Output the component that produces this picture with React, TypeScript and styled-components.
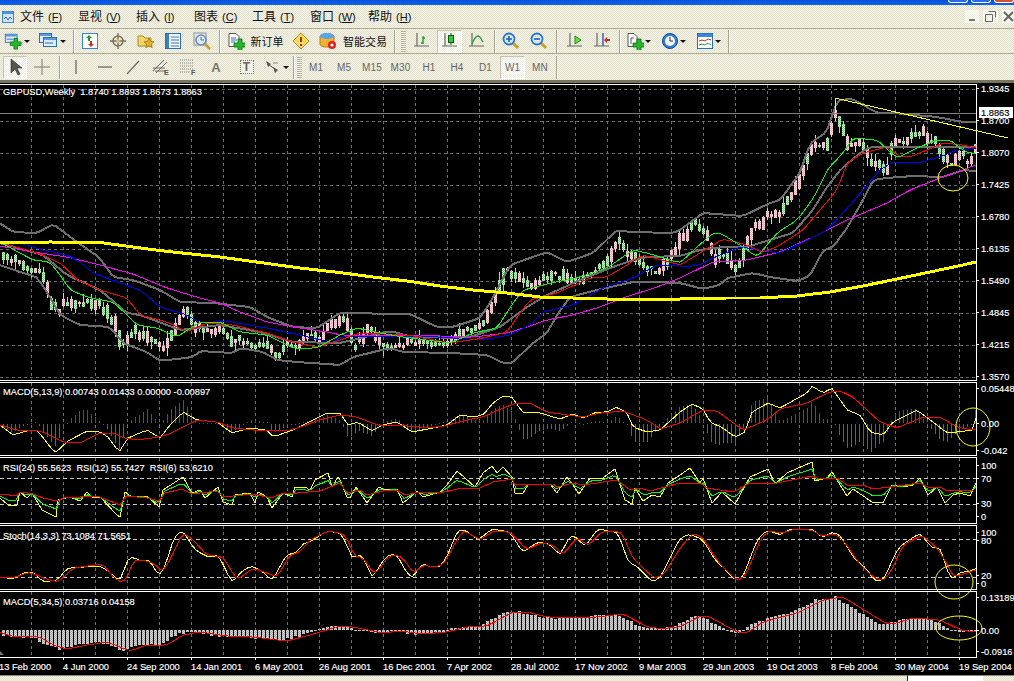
import React from "react";
import styled, { createGlobalStyle } from "styled-components";

type Pt = [number, number];
const P = (...n: number[]): Pt[] => { const r: Pt[] = []; for (let i = 0; i < n.length; i += 2) r.push([n[i], n[i + 1]]); return r; };
const at = (pts: Pt[], x: number): number => {
  if (x <= pts[0][0]) return pts[0][1];
  for (let i = 1; i < pts.length; i++) if (x <= pts[i][0]) {
    const [a, b] = pts[i - 1]; const [c, d] = pts[i];
    return b + ((d - b) * (x - a)) / (c - a || 1);
  }
  return pts[pts.length - 1][1];
};
const sequence = (fn: (x: number) => number) => { const o: string[] = []; for (let x = 0; x <= 976; x += 4) o.push(`${x},${fn(x).toFixed(1)}`); return o.join(" "); };
const raw = (pts: Pt[]) => pts.map(p => p.join(",")).join(" ");
const smooth = (pts: Pt[], r: number) => sequence(x => (at(pts, x - r) + at(pts, x) * 2 + at(pts, x + r)) / 4);
let seed = 17;
const rnd = () => { seed = (seed * 16807) % 2147483647; return (seed % 10000) / 10000; };

const MA200 = P(0,243,50,242,100,242.5,160,250.6,220,257,300,268,340,272.6,373,277,407,281,440,286,473,290,507,293,540,297,573,298,607,299,680,299,727,298,760,298,797,296,830,292,863,286,897,279,930,272,963,265,976,262);
const MAG = P(0,246,33,252,67,257,100,265,133,274,167,288,200,298,220,303,240,312,267,322,300,328,333,333,340,335,373,335,440,336,473,337,507,333,527,327,547,320,573,315,600,307,623,298,657,287,680,278,713,262,747,260,780,252,813,237,847,220,887,203,910,190,940,178,963,170,975,165);
const BLUE = P(0,243,20,243,43,250,67,255,80,262,93,273,117,282,140,290,160,307,187,315,200,323,227,321,267,328,300,335,333,343,340,337,423,336,483,340,510,335,530,325,543,312,573,305,603,288,633,278,657,265,680,266,697,266,713,258,740,247,760,250,780,253,803,242,827,230,843,213,863,190,880,170,893,162,917,163,940,157,957,150,975,148);
const RED = P(0,243,20,248,43,255,63,265,77,280,100,290,127,298,140,315,167,322,187,332,207,323,233,325,267,333,293,342,317,347,340,340,360,333,407,335,450,343,483,338,507,332,520,313,530,300,557,293,590,278,607,277,627,265,643,255,680,265,700,253,723,239,747,245,763,253,780,245,803,230,820,210,837,190,847,163,863,153,887,147,900,157,910,157,927,150,943,143,963,145,975,148);
const GREEN = P(0,242,20,253,33,260,50,262,60,275,70,290,90,298,113,302,127,315,137,325,157,328,177,337,200,322,220,322,240,332,267,335,293,348,317,348,340,335,357,328,380,333,403,337,450,343,473,333,497,328,513,303,523,290,547,284,580,277,607,268,633,250,647,253,680,263,697,247,713,233,720,233,740,245,757,257,777,233,797,220,810,203,818,190,827,170,843,153,853,138,877,140,897,158,917,148,937,140,950,140,967,153,975,153);
const UP = P(0,223,13,232,37,233,53,224,77,242,100,258,113,277,133,280,160,290,180,302,213,303,250,307,267,317,293,327,317,328,340,313,410,314,437,327,453,327,480,318,490,303,510,265,547,252,567,262,593,253,617,230,630,232,673,233,680,230,703,213,743,216,770,203,780,200,800,173,810,143,827,132,837,100,853,99,877,113,893,113,937,117,963,122,975,122);
const LOW = P(0,265,20,272,37,277,50,297,60,315,80,325,110,327,123,343,147,352,160,361,193,357,200,351,233,353,240,348,263,352,277,360,297,362,340,365,353,357,390,348,403,352,450,353,487,355,503,363,512,363,533,343,547,333,557,315,570,297,597,290,633,282,653,282,680,283,703,289,720,285,727,278,753,273,770,277,797,281,810,276,823,250,833,247,847,228,863,200,873,180,887,178,913,176,943,177,963,170,975,171);
const MID = P(0,243,43,255,67,275,100,290,127,313,140,315,167,325,180,330,220,325,260,332,293,342,340,343,390,331,413,337,467,338,500,327,527,307,547,295,580,280,613,267,633,260,647,257,680,256,700,250,723,247,747,247,773,239,793,233,813,210,825,190,840,170,860,153,870,147,913,147,975,147);
const PRICE = P(0,255,10,258,20,262,30,268,43,275,50,300,60,315,63,305,70,302,85,302,100,305,115,325,122,345,133,330,150,340,165,350,170,335,180,320,187,310,195,325,205,330,220,330,230,340,240,340,255,345,270,345,277,358,285,345,295,345,310,335,320,340,330,325,340,320,345,320,355,345,370,328,380,345,400,345,420,340,440,345,450,340,465,330,485,325,490,310,495,295,505,270,515,275,520,280,530,285,540,280,555,275,575,280,590,275,605,265,617,240,625,250,640,262,650,270,660,270,675,250,680,240,687,233,695,222,700,227,707,233,712,250,715,260,722,252,728,257,732,265,737,268,742,260,748,242,752,230,762,223,768,213,775,213,780,217,783,207,788,198,795,188,800,177,803,173,812,145,820,147,828,143,832,123,835,113,843,128,848,147,852,143,860,143,872,163,880,167,887,170,892,143,900,140,907,142,915,133,923,130,928,143,935,140,943,153,950,163,957,158,963,155,968,163,975,150);

const MACD_Y = P(0,425,13,435,30,430,37,430,55,453,68,441,87,431,100,432,108,437,119,452,128,438,147,430,160,438,170,425,183,412,197,420,217,422,232,433,250,428,267,430,273,437,293,430,307,423,327,413,340,413,348,425,358,422,372,431,382,425,397,422,412,432,433,428,447,425,460,415,473,417,483,415,493,403,503,396,512,397,523,413,537,412,560,419,573,414,583,418,597,412,607,412,617,407,627,413,633,427,647,432,660,430,680,412,692,404,703,409,710,422,723,428,735,437,745,432,752,412,768,403,780,408,807,393,812,386,823,393,832,388,847,410,860,415,870,432,883,435,893,422,917,410,933,422,947,433,957,432,973,430,976,417);
const MACD_R = P(0,425,20,431,33,430,43,432,63,442,80,443,100,433,113,433,127,439,147,439,167,435,183,427,197,420,217,422,233,428,253,430,287,431,300,427,320,420,340,415,357,417,380,426,397,425,420,427,440,427,467,420,483,417,503,408,517,403,530,403,547,412,567,415,583,417,600,413,623,411,647,420,660,429,680,423,703,410,717,411,743,430,767,420,780,409,807,403,830,392,840,391,853,397,880,422,897,428,923,417,940,417,957,427,973,430);
const RSI_Y = P(0,498,8,505,17,505,20,492,27,498,32,493,42,510,56,517,58,500,70,497,80,501,87,492,93,498,100,497,117,515,120,517,125,492,132,497,147,496,159,507,163,490,183,477,192,493,200,490,205,498,218,487,223,502,232,505,235,495,250,493,255,503,258,492,267,497,272,508,283,493,292,497,295,487,305,487,310,490,315,480,328,473,332,487,338,477,340,480,347,497,350,498,356,487,367,503,379,487,385,490,397,489,403,503,407,500,417,491,423,497,440,492,447,485,457,471,465,478,475,487,483,473,492,466,497,473,503,467,512,477,515,493,523,493,528,485,550,484,557,493,567,477,573,485,579,494,590,478,603,478,615,469,625,500,632,504,635,488,643,501,652,495,660,497,668,483,680,475,690,468,700,483,703,478,712,503,722,492,735,504,750,477,768,469,775,484,787,473,812,462,815,481,827,478,832,472,847,496,853,489,872,502,883,503,892,485,903,487,913,485,920,478,928,495,937,487,945,503,953,495,960,493,970,496,976,483);
const RSI_R = P(0,494,17,496,20,492,33,494,43,498,57,501,63,498,97,496,110,501,120,505,126,496,147,498,159,501,165,493,182,489,192,494,217,491,223,497,233,496,253,494,272,498,283,493,297,493,320,491,340,483,347,493,360,490,367,495,383,491,397,490,405,495,420,492,440,493,457,489,480,488,493,482,512,479,515,485,553,484,557,487,573,483,583,485,617,480,630,490,640,488,650,491,680,483,700,483,707,488,733,492,750,483,777,483,812,476,817,478,837,478,847,485,863,485,873,489,890,487,920,483,930,488,940,487,947,491,973,490);
const STO_Y = P(0,577,13,579,25,572,33,572,43,582,58,580,67,568,100,566,107,570,120,582,128,558,133,557,140,561,150,560,159,577,165,567,173,540,180,531,183,531,195,550,210,558,218,554,232,583,243,570,252,566,263,572,272,581,287,554,297,553,303,543,310,542,327,531,340,533,345,540,352,559,360,554,365,560,372,579,382,562,388,555,397,554,403,567,412,579,422,563,430,567,440,567,447,557,458,529,465,530,478,540,492,529,510,532,523,553,537,542,550,544,560,556,570,535,575,536,585,547,598,528,607,531,618,532,628,562,638,567,652,582,660,578,680,538,690,534,703,540,715,560,723,567,737,582,743,577,757,540,767,530,780,535,790,529,812,529,823,538,832,532,840,535,855,560,865,567,875,581,883,581,897,550,903,544,920,533,932,548,940,547,951,581,960,572,970,572,975,568);
const STO_R = P(0,577,13,578,30,572,43,578,57,582,63,578,73,568,103,564,113,577,122,583,128,577,133,560,143,560,153,563,163,572,170,560,183,532,193,540,207,555,223,557,237,580,253,568,277,577,290,555,300,552,310,540,328,531,340,533,347,537,353,555,363,558,375,575,387,558,397,554,407,563,413,574,423,565,433,567,443,565,453,547,463,530,480,540,493,531,510,532,527,550,540,543,553,545,563,555,577,537,588,546,602,531,622,532,632,557,642,567,655,579,665,573,680,548,693,533,703,538,718,562,738,582,747,573,760,540,768,531,782,533,795,529,812,530,823,537,833,533,843,540,858,562,873,577,883,581,892,570,903,545,922,535,937,548,945,560,953,577,967,573,975,570);
const AO_R = P(0,632,10,636,40,637,53,645,67,649,87,645,107,642,130,651,147,645,167,645,183,635,200,632,227,636,253,637,287,641,310,635,340,626,353,627,383,633,400,631,423,634,447,632,467,627,487,626,513,612,527,612,547,617,573,618,597,617,623,614,650,628,670,628,680,627,700,616,708,616,737,632,747,633,763,622,797,613,823,600,843,597,887,624,897,623,913,618,940,620,963,631,975,631);

const VGRID: number[] = []; for (let x = 31; x < 976; x += 32) VGRID.push(x);
const BARS: number[] = []; for (let x = 3; x < 976; x += 4) BARS.push(x);
const CANDLES = BARS.map(x => {
  const c = at(PRICE, x) + (rnd() - 0.5) * 5, prev = at(PRICE, x - 4), next = at(PRICE, x + 4);
  const up = rnd() < 0.72 ? next - prev < 0 : next - prev >= 0;
  const h = 2 + rnd() * rnd() * 9 + Math.min(9, Math.abs(next - prev) * 0.5);
  const top = c - h / 2, wt = rnd() * rnd() * 9, wb = rnd() * rnd() * 9;
  return { x, up, top: Math.round(top), h: Math.round(h), wt: Math.round(top - wt), wb: Math.round(top + h + wb) };
});

const Global = createGlobalStyle`
  html, body { margin: 0; padding: 0; background: #ece9d8; overflow: hidden; }
  * { box-sizing: border-box; }
`;
const Window = styled.div`
  width: 1014px; height: 681px; display: flex; flex-direction: column; overflow: hidden;
  font-family: "Liberation Sans", "Noto Sans CJK SC", sans-serif;
  background: repeating-conic-gradient(#f7f5ea 0 25%, #e2dfca 0 50%) 0 0 / 2px 2px;
`;
const TitleBar = styled.div`
  height: 5px; flex: none; display: flex; justify-content: flex-end; align-items: flex-end; gap: 3px; padding-right: 0;
  background: linear-gradient(#0a4fd6, #0b63ee);
`;
const CaptionBtn = styled.div<{ $red?: boolean }>`
  width: 20px; height: 3px; border: 1px solid #fff; border-top: 0; border-radius: 0 0 3px 3px; margin-bottom: 2px;
  background: ${p => (p.$red ? "#d8502a" : "#2a6ae8")};
`;
const MenuBar = styled.div`
  height: 24px; flex: none; display: flex; align-items: center; border-bottom: 1px solid #aca98f; position: relative;
`;
const MdiIcon = styled.div` width: 20px; padding-left: 2px; height: 14px; display: flex; margin-top: 3px; `;
const MenuItem = styled.div`
  width: 58px; font-size: 12px; color: #111; white-space: nowrap; font-family: "Noto Sans CJK SC", sans-serif; line-height: 14px; margin-top: -1px;
`;
const MenuKey = styled.span` font-size: 11px; font-family: "Liberation Sans", sans-serif; margin-left: 4px; u { text-decoration-thickness: 1px; } `;
const WinBtns = styled.div` position: absolute; right: 0; top: 5px; display: flex; gap: 4px; `;
const WinBtn = styled.div<{ $w: number }>`
  width: ${p => p.$w}px; height: 13px; display: flex; align-items: center; justify-content: center; background: rgba(255,255,255,.55);
`;
const ToolRow = styled.div<{ $h: number; $dark?: boolean }>`
  height: ${p => p.$h}px; flex: none; display: flex; align-items: center;
  border-bottom: ${p => (p.$dark ? "3px solid #77745f" : "1px solid #aca98f")};
`;
const Slot = styled.div<{ $w: number; $on?: boolean }>`
  width: ${p => p.$w}px; height: 23px; flex: none; display: flex; align-items: center; justify-content: center;
  ${p => p.$on ? "background: repeating-conic-gradient(#fff 0 25%, #f0eee2 0 50%) 0 0 / 2px 2px; border: 1px solid #c8c5ae; border-right-color:#fff; border-bottom-color:#fff;" : ""}
`;
const Sep = styled.div<{ $w: number }>`
  width: ${p => p.$w}px; height: 23px; flex: none; display: flex; justify-content: center;
  &::after { content: ""; width: 1px; height: 100%; background: #a7a48d; box-shadow: 1px 0 0 #fff; }
`;
const Grip = styled.div<{ $w: number }>`
  width: ${p => p.$w}px; height: 21px; flex: none; display: flex; justify-content: center;
  &::after { content: ""; width: 5px; height: 100%; background: repeating-linear-gradient(#b3b09c 0 1px, #f7f5ea 1px 2px); }
`;
const Drop = styled.div<{ $w: number }>`
  width: ${p => p.$w}px; flex: none; display: flex; justify-content: center;
  &::after { content: ""; border: 3px solid transparent; border-top: 3px solid #111; border-bottom: 0; }
`;
const Gap = styled.div<{ $w: number }>` width: ${p => p.$w}px; flex: none; `;
const ToolText = styled.div<{ $w: number }>`
  width: ${p => p.$w}px; flex: none; text-align: center; font-size: 11px; color: #111; white-space: nowrap;
  font-family: "Noto Sans CJK SC", sans-serif;
`;
const Tf = styled(Slot)` font-size: 10px; color: #666; letter-spacing: .1px; `;
const ChartArea = styled.div` height: 592px; flex: none; background: #000; overflow: visible; position: relative; `;
const PaneSvg = styled.svg`
  display: block; overflow: visible; width: 1014px;
  font-family: "Liberation Sans", sans-serif; font-size: 9.3px;
  polyline { fill: none; shape-rendering: crispEdges; }
  line, rect { shape-rendering: crispEdges; }
  text { fill: #fff; stroke: #fff; stroke-width: .15px; white-space: pre; }
  .ring { fill: none; stroke: #ffff00; stroke-width: 1; }
  .boll { stroke: #6e6e6e; stroke-width: 2; }
  .g { stroke: #6e6e6e; stroke-dasharray: 3 3; }
  .lvl { stroke: #c8c8c8; stroke-dasharray: 4 3; }
`;
const Footer = styled.div` height: 6px; flex: none; display: flex; justify-content: flex-start; `;
const FooterFill = styled.div<{ $w: number; $white?: boolean }>`
  width: ${p => p.$w}px; height: 100%; border-top: 1px solid #8b8973;
  ${p => p.$white ? "background:#fff; border-left:1px solid #222;" : ""}
`;

const Axis = ({ y }: { y: number }) => <line x1={0} x2={976} y1={y + 0.5} y2={y + 0.5} stroke="#fff" />;
const VLines = ({ a, b }: { a: number; b: number }) => <>{VGRID.map(x => <line key={x} className="g" x1={x + 0.5} x2={x + 0.5} y1={a} y2={b} />)}</>;
const Label = ({ y, t }: { y: number; t: string }) => <>
  <line x1={976} x2={979} y1={y + 0.5} y2={y + 0.5} stroke="#fff" />
  <text x={981} y={y + 4}>{t}</text>
</>;
const RightEdge = ({ a, b }: { a: number; b: number }) => <line x1={976.5} x2={976.5} y1={a} y2={b} stroke="#fff" />;

const Defs = () => <defs>
  <pattern id="pink" width="2" height="2" patternUnits="userSpaceOnUse"><rect width="2" height="2" fill="#ffe4ea" /><rect width="1" height="1" fill="#ff9db2" /><rect x="1" y="1" width="1" height="1" fill="#ff9db2" /></pattern>
  <pattern id="lime" width="2" height="2" patternUnits="userSpaceOnUse"><rect width="2" height="2" fill="#d8ffd8" /><rect width="1" height="1" fill="#5fd65f" /><rect x="1" y="1" width="1" height="1" fill="#5fd65f" /></pattern>
  <pattern id="grey" width="2" height="2" patternUnits="userSpaceOnUse"><rect width="2" height="2" fill="#d8d8d8" /><rect width="1" height="1" fill="#a4a4a4" /><rect x="1" y="1" width="1" height="1" fill="#a4a4a4" /></pattern>
</defs>;

const MainPane = () => (
  <PaneSvg height={298} viewBox="0 83 1014 298">
    <Defs />
    <Axis y={84} /><Axis y={380} /><RightEdge a={84} b={381} />
    <VLines a={85} b={380} />
    {[89,121,153,185,217,249,281,313,345,377].map(y => <line key={y} className="g" x1={0} x2={976} y1={y + 0.5} y2={y + 0.5} />)}
    {CANDLES.map(c => <g key={c.x}>
      <line x1={c.x + 0.5} x2={c.x + 0.5} y1={c.wt} y2={c.wb} stroke={c.up ? "#ffc0cb" : "#90ee90"} />
      <rect x={c.x - 1} y={c.top} width={3} height={c.h} fill={c.up ? "url(#pink)" : "url(#lime)"} />
    </g>)}
    <line x1={0} x2={976} y1={113.5} y2={113.5} stroke="#808080" />
    <polyline className="boll" points={smooth(UP, 3)} />
    <polyline className="boll" points={smooth(LOW, 3)} />
    <polyline className="boll" points={smooth(MID, 3)} />
    <polyline points={smooth(MAG, 3)} stroke="#ff00ff" />
    <polyline points={smooth(BLUE, 3)} stroke="#0000ff" />
    <polyline points={smooth(RED, 3)} stroke="#ff0000" />
    <polyline points={smooth(GREEN, 3)} stroke="#00ff00" />
    <polyline points={raw(MA200)} stroke="#ffff00" strokeWidth={3} />
    <polyline points="835,98 1008,138" stroke="#ffff00" />
    <line x1={835.5} x2={835.5} y1={98} y2={112} stroke="#ffff00" />
    <ellipse className="ring" cx={953} cy={178} rx={15} ry={13} />
    <text x={3} y={95}>GBPUSD,Weekly  1.8740 1.8893 1.8673 1.8863</text>
    <Label y={88} t="1.9345" /><Label y={120} t="1.8700" /><Label y={152} t="1.8070" /><Label y={184} t="1.7425" />
    <Label y={216} t="1.6780" /><Label y={248} t="1.6135" /><Label y={280} t="1.5490" /><Label y={312} t="1.4845" />
    <Label y={344} t="1.4215" /><Label y={376} t="1.3570" />
    <rect x={979} y={107} width={34} height={11} fill="#fff" />
    <text x={981} y={116} style={{ fill: "#000", stroke: "#000" }}>1.8863</text>
  </PaneSvg>
);

const MacdPane = () => (
  <PaneSvg height={75} viewBox="0 381 1014 75">
    <Axis y={382} /><RightEdge a={382} b={456} />
    <VLines a={383} b={455} />
    {BARS.map(x => {
      const v = Math.round((at(MACD_R, x) - at(MACD_Y, x)) * 1.5);
      const up = v >= 0;
      return <rect key={x} x={x} y={up ? 423 - v : 424} width={1} height={Math.max(1, Math.abs(v))} fill={up ? "#e01818" : "#2a8a2a"} />;
    })}
    <polyline points={smooth(MACD_Y, 1)} stroke="#ffff00" />
    <polyline points={smooth(MACD_R, 2)} stroke="#ff0000" />
    <ellipse className="ring" cx={973} cy={427} rx={17} ry={19} />
    <text x={3} y={395}>MACD(5,13,9) 0.00743 0.01433 0.00000 -0.00897</text>
    <Label y={388} t="0.05448" /><Label y={423} t="0.00" /><Label y={450} t="-0.042" />
  </PaneSvg>
);

const RsiPane = () => (
  <PaneSvg height={68} viewBox="0 456 1014 68">
    <Axis y={455} /><Axis y={457} /><RightEdge a={457} b={524} />
    <VLines a={458} b={524} />
    <line className="lvl" x1={0} x2={976} y1={478.5} y2={478.5} /><line className="lvl" x1={0} x2={976} y1={504.5} y2={504.5} />
    <polyline points={raw(RSI_Y)} stroke="#ffff00" />
    <polyline points={sequence(x => (at(RSI_Y, x) + at(RSI_R, x)) / 2)} stroke="#00ff00" />
    <polyline points={raw(RSI_R)} stroke="#ff0000" />
    <text x={3} y={471}>RSI(24) 55.5623  RSI(12) 55.7427  RSI(6) 53.6210</text>
    <Label y={465} t="100" /><Label y={478} t="70" /><Label y={503} t="30" /><Label y={516} t="0" />
  </PaneSvg>
);

const StochPane = () => (
  <PaneSvg height={66} viewBox="0 524 1014 66">
    <Axis y={523} /><Axis y={525} /><RightEdge a={525} b={590} />
    <VLines a={526} b={590} />
    <line className="lvl" x1={0} x2={976} y1={539.5} y2={539.5} /><line className="lvl" x1={0} x2={976} y1={577.5} y2={577.5} />
    <polyline points={smooth(STO_Y, 3)} stroke="#ffff00" />
    <polyline points={smooth(STO_R, 3)} stroke="#ff0000" />
    <ellipse className="ring" cx={954} cy={582} rx={19} ry={17} />
    <text x={3} y={539}>Stoch(14,3,3) 73.1084 71.5651</text>
    <Label y={532} t="100" /><Label y={540} t="80" /><Label y={575} t="20" /><Label y={583} t="0" />
  </PaneSvg>
);

const DATES = ["13 Feb 2000","4 Jun 2000","24 Sep 2000","14 Jan 2001","6 May 2001","26 Aug 2001","16 Dec 2001","7 Apr 2002","28 Jul 2002","17 Nov 2002","9 Mar 2003","29 Jun 2003","19 Oct 2003","8 Feb 2004","30 May 2004","19 Sep 2004"];
const AoPane = () => (
  <PaneSvg height={85} viewBox="0 590 1014 85">
    <Axis y={589} /><Axis y={591} /><Axis y={657} /><RightEdge a={591} b={658} />
    <VLines a={592} b={657} />
    {BARS.map(x => {
      const y = Math.round(at(AO_R, x + 8) + (rnd() - 0.5) * 2);
      const top = Math.min(y, 630), h = Math.max(1, Math.abs(y - 630));
      return <rect key={x} x={x - 1} y={top} width={3} height={h} fill="url(#grey)" />;
    })}
    <polyline points={smooth(AO_R, 3)} stroke="#ff0000" />
    <path d="M0 651 L4 655 L0 655Z" fill="#777" />
    <ellipse className="ring" cx={959} cy={628} rx={23} ry={12} />
    <text x={3} y={605}>MACD(5,34,5) 0.03716 0.04158</text>
    <Label y={597} t="0.13189" /><Label y={630} t="0.00" /><Label y={651} t="-0.0916" />
    {DATES.map((d, i) => <g key={d}>
      <line x1={-0.5 + 64 * i} x2={-0.5 + 64 * i} y1={657} y2={660} stroke="#fff" />
      <text x={-1 + 64 * i} y={670}>{d}</text>
    </g>)}
  </PaneSvg>
);

const Plus = ({ x, y, s = 8 }: { x: number; y: number; s?: number }) => {
  const t = Math.round(s / 3);
  return <path d={`M${x + t} ${y}h${t}v${t}h${t}v${t}h${-t}v${t}h${-t}v${-t}h${-t}v${-t}h${t}z`} fill="#22b82a" stroke="#0a6a14" strokeWidth={0.8} />;
};
const Ico = ({ children, w = 18 }: { children: React.ReactNode; w?: number }) => <svg width={w} height={18} viewBox={`0 0 ${w} 18`}>{children}</svg>;
const BlueWin = ({ x, y, w, h }: { x: number; y: number; w: number; h: number }) => <>
  <rect x={x + 0.5} y={y + 0.5} width={w} height={h} fill="#dfeafa" stroke="#2a70b8" />
  <rect x={x + 1} y={y + 1} width={w - 1} height={2} fill="#5b9bdc" />
</>;
const Axes = () => <path d="M3 1v13M0 14h15" stroke="#6a6a62" fill="none" strokeWidth={1.2} />;
const Lens = ({ sign }: { sign?: "+" | "-" }) => <>
  <path d="M10 10l6 6" stroke="#c8a028" strokeWidth={3} />
  <circle cx={7} cy={7} r={5.5} fill="#dbe9fb" stroke="#2878c8" strokeWidth={1.8} />
  <path d={sign === "+" ? "M4 7h6M7 4v6" : "M4 7h6"} stroke="#2060b0" strokeWidth={1.6} />
</>;

const iNewChart = <Ico w={20}><BlueWin x={1} y={1} w={13} h={9} /><path d="M3 7h7" stroke="#2a70b8" /><Plus x={7} y={6} s={11} /></Ico>;
const iProfile = <Ico w={20}><BlueWin x={1} y={1} w={12} h={9} /><BlueWin x={5} y={5} w={13} h={9} /><path d="M7 11h8" stroke="#2a70b8" /></Ico>;
const iWatch = <Ico><rect x={1.5} y={1.5} width={15} height={15} fill="#fff" stroke="#3a86d0" /><path d="M8 3l3 3H9v3H7V6H5z" fill="#1a9a2a" /><path d="M10 15l-3-3h2V9h2v3h2z" fill="#d82818" /></Ico>;
const iNav = <Ico><circle cx={9} cy={9} r={5} fill="none" stroke="#77745f" strokeWidth={1.6} /><path d="M9 1v16M1 9h16" stroke="#77745f" strokeWidth={1.4} /><rect x={7.5} y={7.5} width={3} height={3} fill="#e8c070" /></Ico>;
const iFav = <Ico><path d="M1 4h5l2 2h6v8H1z" fill="#f4d468" stroke="#b08c28" /><path d="M12 6l1.6 3.4 3.4.4-2.5 2.3.7 3.6-3.2-1.8-3.2 1.8.7-3.6L7 9.8l3.4-.4z" fill="#e8b020" stroke="#8a6a10" strokeWidth={0.7} /></Ico>;
const iTerm = <Ico><rect x={1.5} y={1.5} width={15} height={15} fill="#eef4fc" stroke="#2a70b8" /><rect x={2} y={2} width={3} height={14} fill="#3a80c8" /><path d="M7 5h8M7 8h8M7 11h8M7 14h8" stroke="#4a7ab0" /></Ico>;
const iTester = <Ico><rect x={1} y={1} width={12} height={12} fill="#e8ecef" stroke="#88929c" /><path d="M12 12l5 5" stroke="#c8a028" strokeWidth={2.6} /><circle cx={8} cy={8} r={5} fill="#dbe9fb" stroke="#6a8cb0" strokeWidth={1.6} /><path d="M8 5v3h3" stroke="#5a6c80" fill="none" /></Ico>;
const iOrder = <Ico><path d="M2 1.5h7l3 3v10H2z" fill="#fff" stroke="#555" /><path d="M4 6h5M4 8h6M4 10h4" stroke="#3a6a9a" /><Plus x={7} y={7} s={11} /></Ico>;
const iWarn = <Ico><path d="M9 1l8 8-8 8-8-8z" fill="#f8d860" stroke="#b89020" /><path d="M9 5v5M9 12v2" stroke="#8a3a10" strokeWidth={2} /></Ico>;
const iSmart = <Ico><ellipse cx={8} cy={4} rx={7} ry={3} fill="#4a9ae0" /><path d="M1 4v8c0 2 3 3 7 3s7-1 7-3V4" fill="#f0b030" stroke="#c07818" /><ellipse cx={8} cy={4} rx={7} ry={3} fill="#58a6e8" /><circle cx={13} cy={13} r={4} fill="#e02020" /><circle cx={13} cy={13} r={1.6} fill="#fff" /></Ico>;
const iBars = <Ico w={16}><Axes /><path d="M9 4v8M7 11h2M9 6h2" stroke="#1a9a2a" strokeWidth={1.4} fill="none" /></Ico>;
const iCandle = <Ico w={16}><Axes /><path d="M9 1v12" stroke="#0a5a10" /><rect x={6.5} y={3.5} width={5} height={7} fill="#34c83c" stroke="#0a5a10" /></Ico>;
const iLine = <Ico w={16}><Axes /><path d="M3 12C5 7 7 4 9 4s3 3 5 6" fill="none" stroke="#2aa030" strokeWidth={1.3} /></Ico>;
const iIn = <Ico><Lens sign="+" /></Ico>;
const iOut = <Ico><Lens sign="-" /></Ico>;
const iAuto = <Ico w={16}><Axes /><path d="M8 4l6 4-6 4z" fill="#7ad848" stroke="#1a8a2a" /></Ico>;
const iShift = <Ico w={16}><Axes /><path d="M9 1v13" stroke="#2060b0" strokeWidth={1.4} /><path d="M16 7h-3V5l-3 3 3 3V9h3z" fill="#d82818" /></Ico>;
const iAddDoc = <Ico><path d="M2 1.5h6l3 3v10H2z" fill="#fff" stroke="#555" /><path d="M5 6v6M5 6h3" stroke="#555" /><Plus x={7} y={7} s={11} /></Ico>;
const iClock = <Ico><circle cx={9} cy={9} r={7.5} fill="#2a80d8" stroke="#0f4a98" /><circle cx={9} cy={9} r={5} fill="#f4f6f8" /><path d="M9 5v4h3" stroke="#333" fill="none" /></Ico>;
const iTpl = <Ico><rect x={1.5} y={1.5} width={15} height={15} fill="#fff" stroke="#2a70b8" /><rect x={2} y={2} width={14} height={3} fill="#3a88d8" /><path d="M3 9l3-1 3 1 3-2 3 1" stroke="#c83020" fill="none" /><path d="M3 13l3-1 3 1 3-2 3 2" stroke="#2a9a30" fill="none" /></Ico>;
const iArrow = <Ico><path d="M5 1v14l4-4 3 6 2-1-3-6h5z" fill="#55554e" stroke="#33332e" strokeWidth={0.6} /></Ico>;
const iCross = <Ico><path d="M9 1v16M1 9h16" stroke="#7a7a70" /></Ico>;
const iV = <Ico><path d="M9 2v14" stroke="#6a6a62" strokeWidth={1.3} /></Ico>;
const iH = <Ico><path d="M2 9h14" stroke="#6a6a62" strokeWidth={1.3} /></Ico>;
const iT = <Ico><path d="M3 16L15 3" stroke="#6a6a62" strokeWidth={1.2} /></Ico>;
const ChanE = styled.text` font: bold 7px "Liberation Sans", sans-serif; fill: #555; `;
const iChan = <Ico><path d="M1 13L12 2M4 15L15 4M1 10h12M3 13h11" stroke="#6a6a62" strokeWidth={1} /><ChanE x={12} y={17}>E</ChanE></Ico>;
const iFib = <Ico><path d="M1 2h13M1 5h13M1 8h13M1 11h13M1 14h10" stroke="#8a8a80" strokeDasharray="1 1" /><ChanE x={12} y={17}>F</ChanE></Ico>;
const LetterA = styled.span` font: bold 13px "Liberation Sans", sans-serif; color: #77776e; `;
const LetterT = styled.span`
  width: 14px; height: 14px; display: flex; align-items: center; justify-content: center;
  font: bold 12px "Liberation Sans", sans-serif; color: #66665e; border: 1px dotted #77776e; background: #f4f2e6;
`;
const iMix = <Ico w={17}><path d="M2 3l5 3-3 3zM9 9l5 3-3 3z" fill="#555" /><path d="M5 7l6 4" stroke="#555" /><path d="M9 5h5" stroke="#888" /></Ico>;
const iMdi = <svg width="12" height="12" viewBox="0 0 12 12"><rect x="0.5" y="0.5" width="11" height="11" fill="#cfe2fa" stroke="#3a86d0" /><rect x="1" y="1" width="10" height="2" fill="#4a94de" /><path d="M2 8l2-2 2 3 2-3 2 2" stroke="#3a6ea8" fill="none" /></svg>;

const MENUS: [string, string][] = [["文件","F"],["显视","V"],["插入","I"],["图表","C"],["工具","T"],["窗口","W"],["帮助","H"]];
const TFS: [string, number][] = [["M1",28],["M5",28],["M15",28],["M30",29],["H1",28],["H4",28],["D1",29]];

export default function App() {
  return (
    <Window>
      <Global />
      <TitleBar><CaptionBtn /><CaptionBtn /><CaptionBtn $red /></TitleBar>
      <MenuBar>
        <MdiIcon>{iMdi}</MdiIcon>
        {MENUS.map(([t, k]) => <MenuItem key={k}>{t}<MenuKey>(<u>{k}</u>)</MenuKey></MenuItem>)}
        <WinBtns>
          <WinBtn $w={14}><svg width="10" height="10"><rect x="2" y="7" width="6" height="2" fill="#777" /></svg></WinBtn>
          <WinBtn $w={15}><svg width="11" height="11"><path d="M3.5 .5h7v6M.5 3.5h7v7h-7z" fill="none" stroke="#666" /></svg></WinBtn>
          <WinBtn $w={12}><svg width="11" height="11"><path d="M1 1l9 9M10 1l-9 9" stroke="#666" strokeWidth="2" /></svg></WinBtn>
        </WinBtns>
      </MenuBar>
      <ToolRow $h={25}>
        <Gap $w={4} /><Slot $w={18}>{iNewChart}</Slot><Drop $w={10} />
        <Gap $w={6} /><Slot $w={20}>{iProfile}</Slot><Drop $w={10} />
        <Sep $w={10} />
        <Slot $w={24}>{iWatch}</Slot><Slot $w={32}>{iNav}</Slot><Slot $w={24}>{iFav}</Slot><Slot $w={30}>{iTerm}</Slot><Slot $w={28}>{iTester}</Slot>
        <Sep $w={6} />
        <Slot $w={28}>{iOrder}</Slot><ToolText $w={34}>新订单</ToolText><Slot $w={34}>{iWarn}</Slot><Slot $w={20}>{iSmart}</Slot>
        <ToolText $w={54}>智能交易</ToolText>
        <Sep $w={4} /><Grip $w={14} />
        <Slot $w={23}>{iBars}</Slot><Gap $w={4} /><Slot $w={25} $on>{iCandle}</Slot><Slot $w={30}>{iLine}</Slot>
        <Sep $w={5} />
        <Slot $w={28}>{iIn}</Slot><Slot $w={28}>{iOut}</Slot>
        <Sep $w={6} />
        <Slot $w={32}>{iAuto}</Slot><Slot $w={22}>{iShift}</Slot>
        <Sep $w={12} />
        <Slot $w={20}>{iAddDoc}</Slot><Drop $w={6} />
        <Gap $w={9} /><Slot $w={20}>{iClock}</Slot><Drop $w={6} />
        <Gap $w={9} /><Slot $w={20}>{iTpl}</Slot><Drop $w={6} />
        <Sep $w={14} />
      </ToolRow>
      <ToolRow $h={29} $dark>
        <Gap $w={3} /><Slot $w={24} $on>{iArrow}</Slot><Slot $w={30}>{iCross}</Slot>
        <Sep $w={4} />
        <Slot $w={30}>{iV}</Slot><Slot $w={28}>{iH}</Slot><Slot $w={28}>{iT}</Slot><Slot $w={28}>{iChan}</Slot><Slot $w={26}>{iFib}</Slot>
        <Slot $w={30}><LetterA>A</LetterA></Slot><Slot $w={31}><LetterT>T</LetterT></Slot>
        <Slot $w={21}>{iMix}</Slot><Drop $w={6} />
        <Sep $w={8} /><Grip $w={5} />
        {TFS.map(([t, w]) => <Tf key={t} $w={w}>{t}</Tf>)}
        <Tf $w={25} $on>W1</Tf><Tf $w={30}>MN</Tf>
        <Sep $w={2} />
      </ToolRow>
      <ChartArea>
        <MainPane /><MacdPane /><RsiPane /><StochPane /><AoPane />
      </ChartArea>
      <Footer>
        <FooterFill $w={907} /><FooterFill $w={76} $white /><FooterFill $w={31} />
      </Footer>
    </Window>
  );
}
